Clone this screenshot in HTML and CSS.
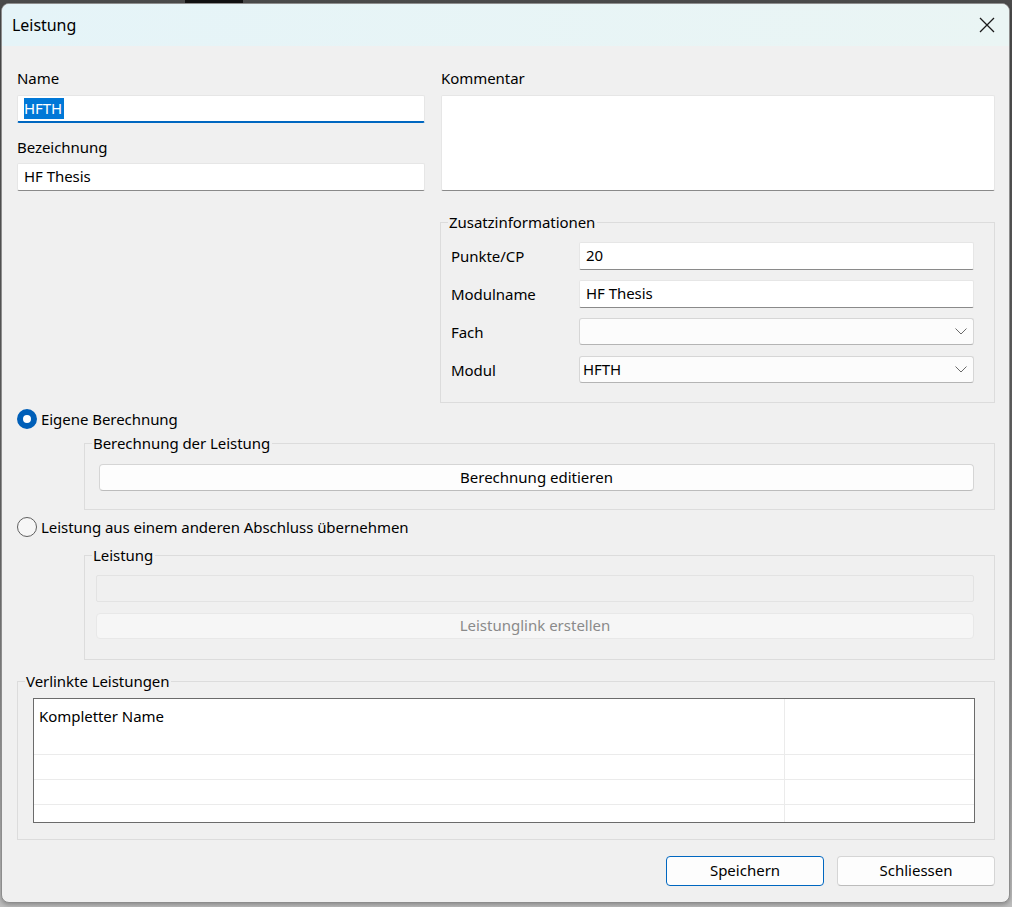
FILE: index.html
```html
<!DOCTYPE html>
<html lang="de">
<head>
    <meta charset="UTF-8">
    <meta name="viewport" content="width=device-width, initial-scale=1.0">
    <title>Leistung</title>
    <link rel="stylesheet" href="styles.css">
</head>
<body>
    <div class="taskbar-strip"></div>
    <div class="fenster">
        <div class="titelleiste">
            <span class="titel">Leistung</span>
            <button class="schliessen-x" title="Schliessen">
                <svg width="16" height="16" viewBox="0 0 16 16"><path d="M1 1 L15 15 M15 1 L1 15" stroke="#1a1a1a" stroke-width="1.3" fill="none"/></svg>
            </button>
        </div>

        <div class="inhalt">
            <div class="oben">
                <div class="spalte-links">
                    <label class="feld-label">Name</label>
                    <div class="textfeld aktiv"><span class="markiert">HFTH</span></div>
                    <label class="feld-label abstand">Bezeichnung</label>
                    <div class="textfeld">HF Thesis</div>
                </div>

                <div class="spalte-rechts">
                    <label class="feld-label">Kommentar</label>
                    <div class="memo"></div>

                    <fieldset class="gruppe zusatz">
                        <legend>Zusatzinformationen</legend>
                        <div class="formular">
                            <span>Punkte/CP</span>
                            <div class="textfeld">20</div>
                            <span>Modulname</span>
                            <div class="textfeld">HF Thesis</div>
                            <span>Fach</span>
                            <div class="combo"><span></span>
                                <svg width="12" height="7" viewBox="0 0 12 7"><path d="M0.5 0.5 L6 6 L11.5 0.5" stroke="#6a6a6a" fill="none"/></svg>
                            </div>
                            <span>Modul</span>
                            <div class="combo"><span>HFTH</span>
                                <svg width="12" height="7" viewBox="0 0 12 7"><path d="M0.5 0.5 L6 6 L11.5 0.5" stroke="#6a6a6a" fill="none"/></svg>
                            </div>
                        </div>
                    </fieldset>
                </div>
            </div>

            <div class="radio-zeile erste">
                <span class="radio gewaehlt"></span>
                <span>Eigene Berechnung</span>
            </div>
            <fieldset class="gruppe eingerueckt berechnung">
                <legend>Berechnung der Leistung</legend>
                <button class="knopf breit">Berechnung editieren</button>
            </fieldset>

            <div class="radio-zeile zweite">
                <span class="radio"></span>
                <span>Leistung aus einem anderen Abschluss übernehmen</span>
            </div>
            <fieldset class="gruppe eingerueckt leistung">
                <legend>Leistung</legend>
                <div class="textfeld gesperrt"></div>
                <button class="knopf breit gesperrt-knopf">Leistunglink erstellen</button>
            </fieldset>

            <fieldset class="gruppe verlinkt">
                <legend>Verlinkte Leistungen</legend>
                <div class="tabelle-rahmen">
                    <table class="tabelle">
                        <tr class="kopf"><td>Kompletter Name</td><td></td></tr>
                        <tr><td></td><td></td></tr>
                        <tr><td></td><td></td></tr>
                        <tr><td></td><td></td></tr>
                        <tr><td></td><td></td></tr>
                    </table>
                </div>
            </fieldset>

            <div class="knopfleiste">
                <button class="knopf standard">Speichern</button>
                <button class="knopf">Schliessen</button>
            </div>
        </div>
    </div>
</body>
</html>
```

FILE: styles.css
```css
html {
    background: linear-gradient(#4b4b4b, #6a6a6a 60%, #bdbdbd);
}

body {
    margin: 0;
    height: 907px;
    overflow: hidden;
    font-family: 'Noto Sans', sans-serif;
    font-size: 15px;
    letter-spacing: -0.05px;
    color: #000;
    position: relative;
}

/* schwarzer Streifen ganz oben (Fenster dahinter) */
.taskbar-strip {
    position: absolute;
    left: 185px;
    top: 0;
    width: 58px;
    height: 3px;
    background: #111;
}

.fenster {
    box-sizing: border-box;
    margin: 3px 0 0 1px;
    width: 1009px;
    height: 900px;
    border: 1px solid #8d8d8d;
    border-radius: 8px;
    background-color: #f0f0f0;
    overflow: hidden;
    box-shadow: 0 2px 4px rgba(0, 0, 0, 0.25);
}

.titelleiste {
    height: 42px;
    display: flex;
    align-items: center;
    justify-content: space-between;
    background: linear-gradient(90deg, #e5f4f8, #eaf5f4);
    padding: 0 14px 0 10px;
}

.titel {
    font-size: 16px;
    padding-bottom: 1px;
}

.schliessen-x {
    border: none;
    background: none;
    padding: 0;
    width: 16px;
    height: 16px;
    margin-top: -1px;
}

.inhalt {
    padding: 22px 14px 0 15px;
}

.oben {
    display: grid;
    grid-template-columns: 408px 554px;
    column-gap: 16px;
}

.feld-label {
    display: block;
    height: 20px;
    line-height: 20px;
    margin-bottom: 7px;
}

.feld-label.abstand {
    margin-top: 14px;
    margin-bottom: 6px;
}

.textfeld {
    box-sizing: border-box;
    height: 28px;
    background: #fff;
    border: 1px solid #e6e6e6;
    border-bottom-color: #8a8a8a;
    border-radius: 2px;
    padding: 0 0 2px 6px;
    display: flex;
    align-items: center;
}

.textfeld.aktiv {
    border-bottom: 2px solid #0067c0;
    padding-bottom: 1px;
}

.markiert {
    background-color: #0078d7;
    color: #fff;
    line-height: 21px;
    padding-right: 2px;
}

.memo {
    box-sizing: border-box;
    height: 96px;
    background: #fff;
    border: 1px solid #e6e6e6;
    border-bottom-color: #8a8a8a;
    border-radius: 2px;
}

.gruppe {
    margin: 0;
    min-width: 0;
    border: 1px solid #dcdcdc;
    border-radius: 0;
}

.gruppe legend {
    padding: 0 2px 0 1px;
    height: 20px;
    line-height: 20px;
}

.zusatz {
    margin-top: 21px;
    margin-left: -1px;
    padding: 10px 20px 19px 10px;
}

.zusatz legend {
    margin-left: -3px;
}

.formular {
    display: grid;
    grid-template-columns: 128px 1fr;
    grid-auto-rows: 27px;
    row-gap: 11px;
    align-items: center;
}

.formular .textfeld {
    height: 28px;
}

.combo {
    box-sizing: border-box;
    height: 27px;
    background: #fcfcfc;
    border: 1px solid #d6d6d6;
    border-bottom-color: #b4b4b4;
    border-radius: 3px;
    padding: 0 6px 2px 3px;
    display: flex;
    align-items: center;
    justify-content: space-between;
}

.combo svg {
    margin-top: 2px;
}

.radio-zeile {
    display: flex;
    align-items: center;
    gap: 4px;
    height: 20px;
}

.radio-zeile.erste {
    margin-top: 6px;
}

.radio-zeile.zweite {
    margin-top: 7px;
}

.radio {
    box-sizing: border-box;
    width: 20px;
    height: 20px;
    border-radius: 50%;
    border: 1px solid #5f5f5f;
    background: #f6f6f6;
}

.radio.gewaehlt {
    border: 6px solid #005fb8;
    background: #fff;
}

.eingerueckt {
    margin-left: 67px;
}

.berechnung {
    margin-top: 4px;
    padding: 11px 20px 18px 14px;
}

.berechnung legend {
    margin-left: -7px;
}

.leistung {
    margin-top: 8px;
    padding: 10px 20px 20px 11px;
}

.leistung legend {
    margin-left: -4px;
}

.knopf {
    box-sizing: border-box;
    height: 30px;
    width: 158px;
    font-family: inherit;
    font-size: 15px;
    color: #000;
    background: #fdfdfd;
    border: 1px solid #d5d5d5;
    border-bottom-color: #bcbcbc;
    border-radius: 4px;
    padding: 0 0 2px;
}

.knopf.breit {
    display: block;
    width: 100%;
    height: 27px;
}

.textfeld.gesperrt {
    height: 27px;
    background: #f0f0f0;
    border: 1px solid #e3e3e3;
}

.gesperrt-knopf {
    margin-top: 11px;
    height: 26px !important;
    background: #f6f6f6;
    border-color: #e8e8e8;
    color: #8a8a8a;
}

.verlinkt {
    margin-top: 11px;
    padding: 7px 19px 16px 15px;
}

.verlinkt legend {
    margin-left: -8px;
}

.tabelle-rahmen {
    box-sizing: border-box;
    height: 125px;
    border: 1px solid #6b6b6b;
    background: #fff;
    overflow: hidden;
}

.tabelle {
    width: 100%;
    border-collapse: collapse;
}

.tabelle td {
    height: 24px;
    padding: 0;
    border-bottom: 1px solid #ebebeb;
    border-right: 1px solid #ebebeb;
}

.tabelle td:first-child {
    width: 750px;
}

.tabelle td:last-child {
    border-right: none;
}

.tabelle .kopf td {
    height: 31px;
    border-bottom: none;
    vertical-align: top;
    padding: 8px 0 0 5px;
    box-sizing: border-box;
    line-height: 18px;
}

.knopfleiste {
    display: flex;
    justify-content: flex-end;
    gap: 13px;
    margin-top: 16px;
}

.knopf.standard {
    border: 1px solid #0067c0;
}
```
